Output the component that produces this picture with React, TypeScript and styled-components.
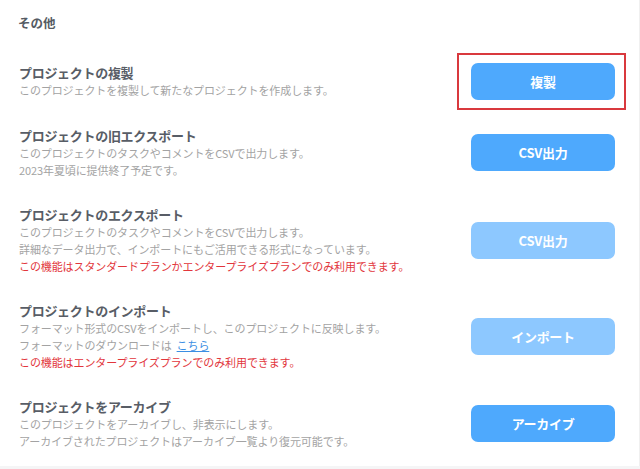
import React from "react";
import styled, { createGlobalStyle } from "styled-components";

const GlobalStyle = createGlobalStyle`
  html, body {
    margin: 0;
    padding: 0;
    background: #ffffff;
  }
  body {
    font-family: "Noto Sans CJK JP", "Noto Sans", sans-serif;
    -webkit-font-smoothing: antialiased;
  }
`;

const Page = styled.div`
  width: 640px;
  min-height: 469px;
  background: #f5f5f6;
  display: flex;
  flex-direction: column;
`;

const Panel = styled.section`
  background: #ffffff;
  padding: 14px 24px 0 19px;
  height: 466px;
  box-sizing: border-box;
  border-right: 1px solid #f0f0f0;
`;

const Heading = styled.h2`
  margin: 0 0 17px -1px;
  font-size: 12.5px;
  line-height: 18px;
  font-weight: 700;
  color: #555b63;
`;

const List = styled.div`
  display: flex;
  flex-direction: column;
`;

const Row = styled.div`
  display: flex;
  align-items: center;
  justify-content: space-between;
  padding: 13.5px 0;
`;

const Info = styled.div`
  display: flex;
  flex-direction: column;
`;

const Title = styled.h3`
  margin: 0;
  font-size: 13px;
  line-height: 18px;
  font-weight: 700;
  color: #585d66;
  letter-spacing: -0.3px;
`;

const Desc = styled.p<{ $tone?: "muted" | "alert" }>`
  margin: 0;
  font-size: 11px;
  line-height: 17px;
  letter-spacing: -0.1px;
  color: ${(p) => (p.$tone === "alert" ? "#e2363c" : "#a3a3a3")};
`;

const Link = styled.a`
  color: #3b8ee3;
  text-decoration: underline;
  margin-left: 5px;
`;

const Highlight = styled.div`
  position: relative;
  &::after {
    content: "";
    position: absolute;
    top: -10px;
    bottom: -10px;
    left: -14px;
    right: -11px;
    border: 2px solid #d9393e;
    pointer-events: none;
  }
`;

const ActionButton = styled.button<{ $disabled?: boolean }>`
  width: 144px;
  height: 37px;
  border: none;
  border-radius: 7px;
  background: ${(p) => (p.$disabled ? "#8dc8ff" : "#4ea9fd")};
  color: #ffffff;
  font-family: "Noto Sans CJK JP", "Noto Sans", sans-serif;
  font-size: 13px;
  font-weight: 700;
  letter-spacing: -0.3px;
  cursor: ${(p) => (p.$disabled ? "default" : "pointer")};
  padding: 0;
  flex-shrink: 0;
`;

export default function App() {
  return (
    <>
      <GlobalStyle />
      <Page>
        <Panel>
          <Heading>その他</Heading>
          <List>
            <Row>
              <Info>
                <Title>プロジェクトの複製</Title>
                <Desc>このプロジェクトを複製して新たなプロジェクトを作成します。</Desc>
              </Info>
              <Highlight>
                <ActionButton>複製</ActionButton>
              </Highlight>
            </Row>
            <Row>
              <Info>
                <Title>プロジェクトの旧エクスポート</Title>
                <Desc>このプロジェクトのタスクやコメントをCSVで出力します。</Desc>
                <Desc>2023年夏頃に提供終了予定です。</Desc>
              </Info>
              <ActionButton>CSV出力</ActionButton>
            </Row>
            <Row>
              <Info>
                <Title>プロジェクトのエクスポート</Title>
                <Desc>このプロジェクトのタスクやコメントをCSVで出力します。</Desc>
                <Desc>詳細なデータ出力で、インポートにもご活用できる形式になっています。</Desc>
                <Desc $tone="alert">この機能はスタンダードプランかエンタープライズプランでのみ利用できます。</Desc>
              </Info>
              <ActionButton $disabled>CSV出力</ActionButton>
            </Row>
            <Row>
              <Info>
                <Title>プロジェクトのインポート</Title>
                <Desc>フォーマット形式のCSVをインポートし、このプロジェクトに反映します。</Desc>
                <Desc>
                  フォーマットのダウンロードは<Link href="#">こちら</Link>
                </Desc>
                <Desc $tone="alert">この機能はエンタープライズプランでのみ利用できます。</Desc>
              </Info>
              <ActionButton $disabled>インポート</ActionButton>
            </Row>
            <Row>
              <Info>
                <Title>プロジェクトをアーカイブ</Title>
                <Desc>このプロジェクトをアーカイブし、非表示にします。</Desc>
                <Desc>アーカイブされたプロジェクトはアーカイブ一覧より復元可能です。</Desc>
              </Info>
              <ActionButton>アーカイブ</ActionButton>
            </Row>
          </List>
        </Panel>
      </Page>
    </>
  );
}
